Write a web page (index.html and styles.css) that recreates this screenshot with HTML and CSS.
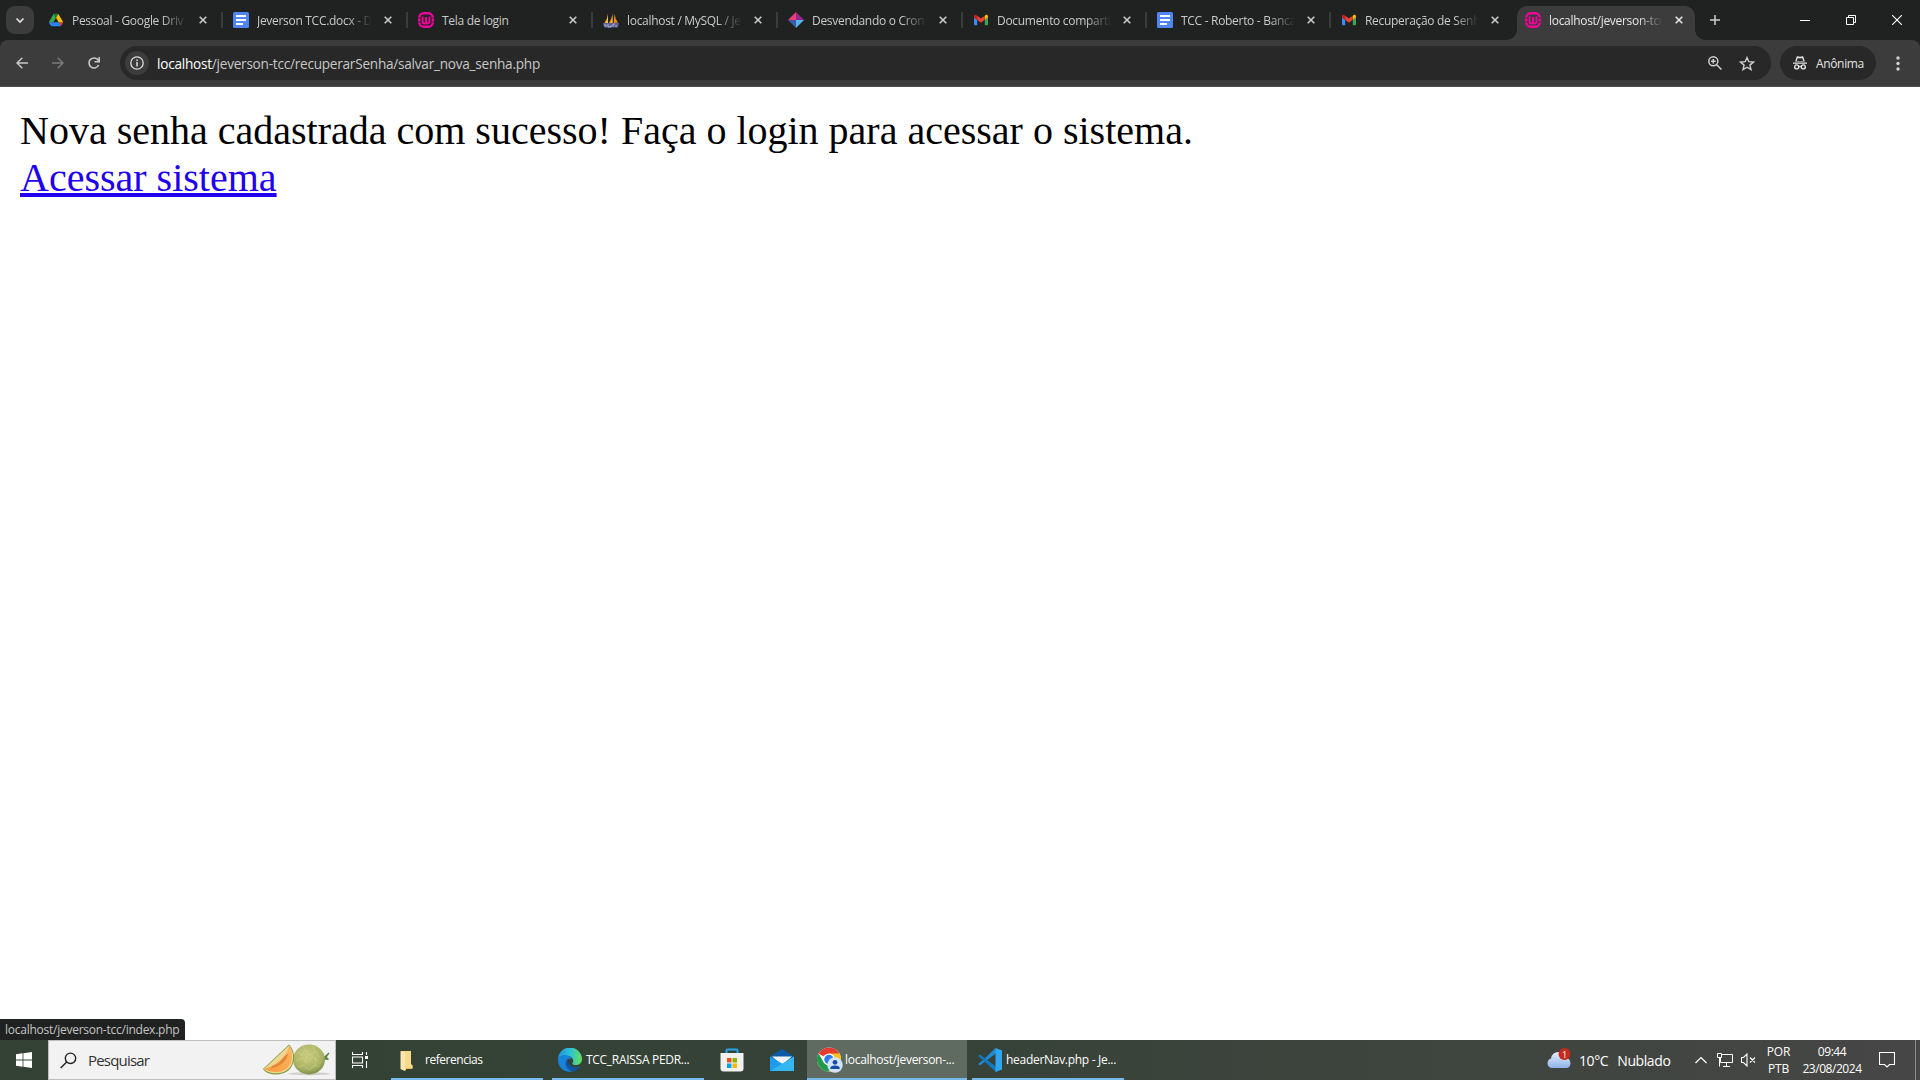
FILE: index.html
```html
<!DOCTYPE html>
<html lang="pt-BR">
<head>
<meta charset="utf-8">
<title>localhost/jeverson-tcc</title>
<link rel="stylesheet" href="styles.css">
</head>
<body>
<svg width="0" height="0" class="defs">
  <symbol id="x" viewBox="0 0 8 8"><path d="M.7.7l6.6 6.6M7.3.7L.7 7.3" fill="none" stroke="currentColor" stroke-width="1.6"/></symbol>
  <symbol id="drive" viewBox="0 0 87.3 78"><path fill="#4285f4" d="M6.6 66.85l3.85 6.65c.8 1.4 1.95 2.5 3.3 3.3L27.5 53H0c0 1.55.4 3.1 1.2 4.5z"/><path fill="#34a853" d="M43.65 25L29.9 1.2c-1.35.8-2.5 1.9-3.3 3.3L1.2 48.5A9 9 0 0 0 0 53h27.5z"/><path fill="#ea4335" d="M73.55 76.8c1.35-.8 2.5-1.9 3.3-3.3l1.6-2.75L86.1 57.5c.8-1.4 1.2-2.95 1.2-4.5H59.8l5.85 11.5z"/><path fill="#188038" d="M43.65 25L57.4 1.2C56.05.4 54.5 0 52.9 0H34.4c-1.6 0-3.15.45-4.5 1.2z"/><path fill="#2684fc" d="M59.8 53H27.5L13.75 76.8c1.35.8 2.9 1.2 4.5 1.2h50.8c1.6 0 3.15-.45 4.5-1.2z"/><path fill="#fbbc04" d="M73.4 26.5L60.7 4.5c-.8-1.4-1.95-2.5-3.3-3.3L43.65 25 59.8 53h27.45c0-1.55-.4-3.1-1.2-4.5z"/></symbol>
  <symbol id="docs" viewBox="0 0 16 16"><rect width="16" height="16" rx="1.5" fill="#4f86f7"/><path d="M3 4h10M3 8h10M3 12h7" stroke="#fff" stroke-width="2"/></symbol>
  <symbol id="wamp" viewBox="0 0 16 16"><rect x="1.2" y="1.2" width="13.6" height="13.6" rx="4.6" fill="none" stroke="#f0059a" stroke-width="2.4"/><path d="M4.600 4.500V9.500a1.700 1.700 0 0 0 3.400.5V5v5a1.700 1.700 0 0 0 3.400-.5V4.500" fill="none" stroke="#f0059a" stroke-width="1.900"/><path d="M0 6h2.500M13.500 6H16M0 10h2.500M13.500 10H16" stroke="#202221" stroke-width=".7"/></symbol>
  <symbol id="pma" viewBox="0 0 16 16"><path fill="#f29111" d="M5 1.500V11H1.200Q4.500 7 5 1.500zM9.500.300V11H5.800Q9.500 6 9.500.300zM11.500 1.500Q12 7 15 10.500l-4.200.5z"/><path fill="#f8c36a" d="M5 4v7H3zM9.500 3v8H8z"/><path fill="#5a5f96" d="M0 11h16l-1 4.500H1z"/><path d="M1 13h2v2M5 12v3h3v-2M10 15v-3h2M13 13v2" stroke="#c2c5df" fill="none" stroke-width=".8"/></symbol>
  <symbol id="gem" viewBox="0 0 16 16"><path fill="#ee3a7f" d="M8 0v8H0z"/><path fill="#92278f" d="M8 0l8 8H8z"/><path fill="#3b5ba9" d="M0 8h8v8z"/><path fill="#56b5e8" d="M8 8h8l-8 8z"/></symbol>
  <symbol id="gmail" viewBox="52 42 88 66"><path fill="#4285f4" d="M58 108h14V74L52 59v43a6 6 0 0 0 6 6"/><path fill="#34a853" d="M120 108h14a6 6 0 0 0 6-6V59l-20 15"/><path fill="#fbbc04" d="M120 48v26l20-15v-8c0-7.420-8.470-11.650-14.400-7.200"/><path fill="#ea4335" d="M72 74V48l24 18 24-18v26L96 92"/><path fill="#c5221f" d="M52 51v8l20 15V48l-5.600-4.200C60.460 39.350 52 43.580 52 51"/></symbol>
</svg>

<div class="tabbar">
  <button class="tab-search"><svg width="10" height="10" viewBox="0 0 10 10"><path d="M1.500 3.500L5 7l3.500-3.500" fill="none" stroke="#e3e3e3" stroke-width="1.700"/></svg></button>
  <div class="tab"><svg class="fav drive"><use href="#drive"/></svg><span class="title fade">Pessoal - Google Driv</span><svg class="close"><use href="#x"/></svg></div>
  <div class="tab"><svg class="fav"><use href="#docs"/></svg><span class="title fade">Jeverson TCC.docx - D</span><svg class="close"><use href="#x"/></svg></div>
  <div class="tab"><svg class="fav"><use href="#wamp"/></svg><span class="title">Tela de login</span><svg class="close"><use href="#x"/></svg></div>
  <div class="tab"><svg class="fav"><use href="#pma"/></svg><span class="title fade">localhost / MySQL / je</span><svg class="close"><use href="#x"/></svg></div>
  <div class="tab"><svg class="fav"><use href="#gem"/></svg><span class="title fade">Desvendando o Cron</span><svg class="close"><use href="#x"/></svg></div>
  <div class="tab narrow"><svg class="fav mail"><use href="#gmail"/></svg><span class="title fade">Documento comparti</span><svg class="close"><use href="#x"/></svg></div>
  <div class="tab narrow"><svg class="fav"><use href="#docs"/></svg><span class="title fade">TCC - Roberto - Banca</span><svg class="close"><use href="#x"/></svg></div>
  <div class="tab narrow last"><svg class="fav mail"><use href="#gmail"/></svg><span class="title fade">Recuperação de Senh</span><svg class="close"><use href="#x"/></svg></div>
  <div class="tab active"><svg class="fav"><use href="#wamp"/></svg><span class="title fade">localhost/jeverson-tcc</span><svg class="close"><use href="#x"/></svg></div>
  <svg class="new-tab" width="10" height="10"><path d="M5 0v10M0 5h10" stroke="#cfcfcf" stroke-width="1.500"/></svg>
  <div class="window-controls">
    <svg width="10" height="10"><path d="M0 5.500h10" stroke="#fff"/></svg>
    <svg width="10" height="10"><path d="M.5 2.500h7v7h-7zM2.500 2.500v-2h7v7h-2" fill="none" stroke="#fff"/></svg>
    <svg width="10" height="10"><path d="M0 0l10 10M10 0L0 10" stroke="#fff" stroke-width="1.100"/></svg>
  </div>
</div>

<div class="toolbar-wrap">
<div class="toolbar">
  <svg class="nav" width="12" height="12" viewBox="0 0 12 12"><path d="M12 6H1.200M6.300.700L1 6l5.300 5.300" fill="none" stroke="#c7c7c7" stroke-width="1.500"/></svg>
  <svg class="nav" width="12" height="12" viewBox="0 0 12 12"><path d="M0 6h10.800M5.700.700L11 6l-5.300 5.300" fill="none" stroke="#7b7b7b" stroke-width="1.500"/></svg>
  <svg class="nav" width="12" height="12" viewBox="0 0 12 12"><path d="M10.600 8A5 5 0 1 1 10.200 3.200L11 4.300M11.200 0v4.700H6.500" fill="none" stroke="#c7c7c7" stroke-width="1.600"/></svg>
  <div class="omnibox">
    <span class="info"><svg width="14" height="14" viewBox="0 0 14 14"><circle cx="7" cy="7" r="6.200" fill="none" stroke="#dcdcdc" stroke-width="1.300"/><path d="M7 6v4.400M7 3.500V5" stroke="#dcdcdc" stroke-width="1.500"/></svg></span>
    <span class="url"><b>localhost</b>/jeverson-tcc/recuperarSenha/salvar_nova_senha.php</span>
    <svg class="zoom" width="14" height="14" viewBox="0 0 14 14"><circle cx="5.300" cy="5.300" r="4.500" fill="none" stroke="#d0d0d0" stroke-width="1.500"/><path d="M8.700 8.700l4.800 4.800M5.300 3v4.600M3 5.300h4.600" stroke="#d0d0d0" stroke-width="1.500"/></svg>
    <svg class="star" width="16" height="15" viewBox="0 0 16 15"><path d="M8 1.600l1.800 4.100 4.600.4-3.500 3 1.100 4.500L8 11.200l-4 2.400 1.100-4.500-3.500-3 4.600-.4z" fill="none" stroke="#d0d0d0" stroke-width="1.400"/></svg>
  </div>
  <div class="incognito">
    <svg width="14" height="14" viewBox="0 0 14 14"><path fill="#e3e3e3" d="M0 6.500h14v1.300H0zM2.200 5.500L3.600.8Q3.800.2 4.500.300L7 .8 9.500.300q.7-.1.9.500l1.400 4.700z"/><path d="M4.600 2.300l-.8 2.700h6.400l-.8-2.700" fill="#282828"/><circle cx="3.700" cy="10.900" r="2" fill="none" stroke="#e3e3e3" stroke-width="1.400"/><circle cx="10.300" cy="10.900" r="2" fill="none" stroke="#e3e3e3" stroke-width="1.400"/><path d="M5.500 10.500h3" stroke="#e3e3e3" stroke-width="1.200"/></svg>
    <span>Anônima</span>
  </div>
  <svg class="menu" width="4" height="15"><g fill="#d0d0d0"><circle cx="2" cy="2" r="1.700"/><circle cx="2" cy="7.500" r="1.700"/><circle cx="2" cy="13" r="1.700"/></g></svg>
</div>
</div>

<main class="page">
  <div class="message">Nova senha cadastrada com sucesso! Faça o login para acessar o sistema.</div>
  <a class="link" href="#">Acessar sistema</a>
  <div class="status">localhost/jeverson-tcc/index.php</div>
</main>

<footer class="taskbar">
  <div class="start"><svg width="16" height="16" viewBox="0 0 16 16"><path fill="#fff" d="M0 2.200L6.600 1.300V7.600H0zM7.400 1.200L16 0v7.600H7.400zM0 8.400h6.600v6.300L0 13.800zM7.400 8.400H16V16l-8.600-1.200z"/></svg></div>
  <div class="search">
    <svg width="17" height="17" viewBox="0 0 17 17"><circle cx="10.500" cy="6.300" r="5.200" fill="none" stroke="#222" stroke-width="1.400"/><path d="M6.700 10L.7 16" stroke="#222" stroke-width="1.400"/></svg>
    <span>Pesquisar</span>
    <svg class="melon" width="68" height="32" viewBox="0 0 68 32">
      <defs><radialGradient id="mg" cx=".45" cy=".35" r=".7"><stop offset="0" stop-color="#ccca80"/><stop offset=".65" stop-color="#abb566"/><stop offset="1" stop-color="#748845"/></radialGradient><linearGradient id="mo" x1="1" y1="0" x2="0" y2="1"><stop offset="0" stop-color="#ffb868"/><stop offset="1" stop-color="#f99a3e"/></linearGradient></defs>
      <ellipse cx="46" cy="29.700" rx="21" ry="1.500" fill="#d2cfc8"/>
      <path d="M59 13.500q3-1 6.500-5l1 1q-2 2-2.500 4l2 1.500-1 1-5-.5z" fill="#5d8244"/>
      <ellipse cx="46" cy="15.500" rx="16" ry="15" fill="url(#mg)"/>
      <path d="M34 8l5 3 3-5 5 5 6-4 3 6M33 17l6-3 5 5 6-6 6 5M35 23l6-2 5 5 6-5 5 2M40 2l4 6M50 2l2 6M44 12l-2 7M53 13l-1 9" fill="none" stroke="#e3dfa0" stroke-width=".7" opacity=".5"/>
      <path d="M26 .5C35.500 10 32 30.500 13 30.500 6 30.500 2 28 0 25z" fill="#7c9a3e"/>
      <path d="M26 1.500C34 11 31 29.300 13 29.300 7 29.300 3 27.500 1 25z" fill="#f0d791"/>
      <path d="M26 1.500C32.500 11 29.500 28 13 28 7.500 28 4 26.500 1 25 12 22 24 14 26 1.500z" fill="url(#mo)"/>
      <path d="M25 9.500C24.500 17 17 22.500 8 24.200 10 20.500 13 21 16 18.500s4-6 9-9z" fill="#e38636"/>
    </svg>
  </div>
  <div class="taskview"><svg width="17" height="16" viewBox="0 0 17 16"><path d="M.5 0v2.500h10V0M.5 16v-2.500h10V16M.5 5h10v6H.5zM14.500 0v3M14.500 9v7" fill="none" stroke="#fff" stroke-width="1.100"/><path fill="#fff" d="M13 4h3v3h-3z"/></svg></div>

  <div class="app folder"><svg width="24" height="24" viewBox="0 0 24 24"><path fill="#e8bd58" d="M6 3h10v13l1.500 1v4H8z"/><path fill="#f6d98a" d="M6 3h10v14l1.500 1v2H11v2.500L6 21z"/><path fill="#fbe7ae" d="M5.500 3l4.500 2v18l-4.500-2z"/></svg><span>referencias</span></div>
  <div class="app edge"><svg width="24" height="24" viewBox="0 0 24 24"><defs><linearGradient id="e1" x1="0" y1=".4" x2="1" y2=".5"><stop offset="0" stop-color="#1d94dc"/><stop offset=".5" stop-color="#2fc2d5"/><stop offset="1" stop-color="#62df5a"/></linearGradient></defs><path d="M0 12A12 12 0 0 1 24 11c0 4-3 6-6.500 6-2.500 0-3.500-1-3-2 2-3-.5-7-5-7C5 8 1 10 0 12z" fill="url(#e1)"/><path d="M0 12C1 5 13 6 14 12c0-1-3-2-5 0-3 4 1 11 7 11C7 26 0 20 0 12z" fill="#1683d8"/><path d="M9.500 11C5 16 9 23 16 23.300c3-1 5.500-3.300 6.500-5.300-5 3-12.500 1-13-7z" fill="#10539f"/></svg><span>TCC_RAISSA PEDR...</span></div>
  <div class="pin"><svg width="24" height="24" viewBox="0 0 24 24"><path d="M6.500 6V2.500q0-1 1-1h9q1 0 1 1V6" fill="none" stroke="#26a7ed" stroke-width="2"/><path d="M.5 5h23v15.500q0 3-3 3h-17q-3 0-3-3z" fill="#f1f1f1"/><path fill="#f25022" d="M7 10h4.500v4.500H7z"/><path fill="#7fba00" d="M12.500 10H17v4.500h-4.500z"/><path fill="#00a4ef" d="M7 15.500h4.500V20H7z"/><path fill="#ffb900" d="M12.500 15.500H17V20h-4.500z"/></svg></div>
  <div class="pin mail-app"><svg width="24" height="24" viewBox="0 0 24 24"><path fill="#0a5ca8" d="M0 8.500L12 1l12 7.500V14H0z"/><path fill="#f0f3f5" d="M2 8.500h20L12 17z"/><path fill="#1e9bea" d="M0 8.500l12 7V23H0z"/><path fill="#34b6f0" d="M24 8.500V23H0z"/></svg></div>
  <div class="app chrome"><svg width="26" height="26" viewBox="0 0 26 26"><circle cx="12" cy="12.500" r="12" fill="#fff"/><path fill="#e33b2e" d="M12 12.500L1.600 6.500a12 12 0 0 1 20.800 0z"/><path fill="#fbc116" d="M12 6.500h10.400A12 12 0 0 1 12 24.500l5.200-9z"/><path fill="#229a4a" d="M1.600 6.500A12 12 0 0 0 12 24.500l5.200-9H6.800z"/><circle cx="12" cy="12.500" r="6" fill="#fff"/><circle cx="12" cy="12.500" r="4.700" fill="#3079e8"/><circle cx="18" cy="18" r="7.700" fill="#d3e2fb"/><circle cx="18" cy="15.300" r="2.400" fill="#174ea6"/><path fill="#174ea6" d="M13.300 22v-1q0-2.500 4.700-2.500t4.700 2.500v1z"/></svg><span>localhost/jeverson-...</span></div>
  <div class="app code"><svg width="24" height="24" viewBox="0 0 24 24"><path fill="#1f8ad2" d="M17.500 0L4.500 12.500 0 16l1.800 1.500L18 5.500z"/><path fill="#1478bd" d="M0 8l1.800-1.500L18 18.500V24L7 14z"/><path fill="#2ea6f2" d="M17.500 0L24 2.500v19L17.500 24z"/></svg><span>headerNav.php - Je...</span></div>

  <div class="tray">
    <div class="weather">
      <svg width="26" height="21" viewBox="0 0 26 21"><defs><linearGradient id="cl" x1="0" y1="0" x2="0" y2="1"><stop offset="0" stop-color="#e8f0fc"/><stop offset="1" stop-color="#8eb2ea"/></linearGradient></defs><path fill="url(#cl)" d="M5 20a5 5 0 0 1 0-9.500Q6 4 12.500 4T20 9.500Q24.500 11 24.500 15.500 24 20 20 20z"/><circle cx="18.500" cy="6" r="6" fill="#c42b1c"/><text x="18.500" y="9.500" text-anchor="middle" class="badge">1</text></svg>
      <span>10°C</span><span class="cond">Nublado</span>
    </div>
    <svg class="caret" width="12" height="8"><path d="M.5 7L6 1.500 11.500 7" fill="none" stroke="#fff" stroke-width="1.200"/></svg>
    <svg class="net" width="16" height="14"><path d="M4 1.500h11.500v8H3.500V5M9.500 9.500v3.500M6 13.500h7M.5.500h4v4h-4zM2.500 4.500v9" fill="none" stroke="#fff"/></svg>
    <svg class="vol" width="15" height="14"><path d="M.5 4.500h2L6 1v12L2.500 9.500h-2zM9 4.500l5 5M14 4.500l-5 5" fill="none" stroke="#fff" stroke-width="1.100"/></svg>
    <div class="lang"><span>POR</span><span>PTB</span></div>
    <div class="clock"><span>09:44</span><span>23/08/2024</span></div>
    <svg class="notif" width="16" height="16"><path d="M.5.500h15v12h-5L8 15l-2.500-2.500h-5z" fill="none" stroke="#fff" stroke-width="1.100"/></svg>
    <div class="peek"></div>
  </div>
</footer>
</body>
</html>
```
FILE: styles.css
```css
* { box-sizing: border-box; }
body {
  margin: 0;
  width: 1920px;
  height: 1080px;
  overflow: hidden;
  display: flex;
  flex-direction: column;
  background: #fff;
  font-family: "Open Sans", "Noto Sans", sans-serif;
  font-size: 12px;
}
svg { flex: none; display: block; }
.defs { position: absolute; }
span { white-space: nowrap; }

.tabbar {
  height: 40px;
  flex: none;
  display: flex;
  align-items: center;
  padding-left: 6px;
  background: #202221;
  color: #c9cac9;
}
.tab-search {
  width: 28px;
  height: 28px;
  margin-right: 4px;
  padding: 0;
  border: 0;
  border-radius: 9px;
  background: #3c3c3c;
  display: flex;
  align-items: center;
  justify-content: center;
}
.tab {
  position: relative;
  width: 185px;
  height: 40px;
  flex: none;
  display: flex;
  align-items: center;
  padding-left: 10px;
}
.tab.narrow { width: 184px; }
.tab::after {
  content: "";
  position: absolute;
  right: 0;
  top: 12px;
  width: 2px;
  height: 16px;
  background: #3c3c3c;
}
.tab.last::after { display: none; }
.fav { width: 16px; height: 16px; }
.fav.drive, .fav.mail { padding: 0 1px; }
.title {
  width: 115px;
  margin: 1px 12px 0 8px;
  letter-spacing: -0.3px;
}
.title.fade {
  -webkit-mask-image: linear-gradient(90deg, #000 78%, transparent);
  mask-image: linear-gradient(90deg, #000 78%, transparent);
}
.close { width: 8px; height: 8px; }
.narrow .title, .active .title { width: 114px; }
.tab.active {
  height: 34px;
  width: 178px;
  margin: 6px 0 0 2px;
  padding: 0 0 6px 8px;
  border-radius: 10px 10px 0 0;
  background: #3c3c3c;
  color: #e6e6e6;
}
.tab.active::before, .tab.active::after {
  content: "";
  position: absolute;
  top: auto;
  bottom: 0;
  width: 10px;
  height: 10px;
}
.tab.active::before { left: -10px; background: radial-gradient(circle at 0 0, transparent 9.5px, #3c3c3c 10px); }
.tab.active::after { right: -10px; background: radial-gradient(circle at 100% 0, transparent 9.5px, #3c3c3c 10px); }
.new-tab { margin-left: 15px; }
.window-controls { margin-left: auto; padding-right: 18px; display: flex; gap: 36px; }

.toolbar-wrap { flex: none; background: #202221; }
.toolbar {
  height: 47px;
  display: flex;
  align-items: center;
  padding: 0 20px 1px 16px;
  border-radius: 8px 8px 0 0;
  background: linear-gradient(0deg, #4c4c4c 1px, #3c3c3c 1px);
}
.nav { margin-right: 24px; }
.omnibox {
  width: 1651px;
  height: 34px;
  margin-left: -4px;
  padding-left: 5px;
  display: flex;
  align-items: center;
  border-radius: 17px;
  background: #282828;
}
.info {
  width: 24px;
  height: 24px;
  border-radius: 50%;
  background: #3c3c3c;
  display: flex;
  align-items: center;
  justify-content: center;
}
.url { margin-left: 8px; color: #c7c7c7; font-size: 13.6px; letter-spacing: -0.24px; }
.url b { font-weight: 400; color: #fff; }
.zoom { margin-left: auto; }
.star { margin: 0 16px 0 17px; }
.incognito {
  width: 96px;
  height: 34px;
  margin-left: 9px;
  padding-left: 13px;
  display: flex;
  align-items: center;
  gap: 9px;
  border-radius: 17px;
  background: #282828;
  color: #e3e3e3;
  letter-spacing: -0.35px;
}
.menu { margin-left: auto; }

.page {
  position: relative;
  flex: 1;
  padding: 20px;
  font: 40px/47px "Liberation Serif", serif;
}
.link {
  color: #2000ee;
  text-decoration: underline;
  text-decoration-thickness: 4px;
  text-underline-offset: 2px;
  text-decoration-skip-ink: none;
}
.status {
  position: absolute;
  left: 0;
  bottom: 0;
  width: 185px;
  height: 21px;
  padding-left: 5px;
  border-radius: 0 4px 0 0;
  background: #202221;
  color: #c4c4c4;
  font: 12px/21px "Open Sans", sans-serif;
  letter-spacing: -0.25px;
  white-space: nowrap;
}

.taskbar {
  height: 40px;
  flex: none;
  display: flex;
  align-items: center;
  background: linear-gradient(90deg, #334235, #364237 50%, #3b443c 62%, #414541 85%, #464646);
  color: #fff;
}
.start { width: 48px; padding-left: 16px; }
.search {
  width: 288px;
  height: 40px;
  display: flex;
  align-items: center;
  padding-left: 11px;
  border: 1px solid #bdbdbd;
  background: #f2f2f2;
  color: #333;
  font-size: 15px;
}
.search span { margin-left: 11px; letter-spacing: -0.8px; }
.melon { margin: 0 4px 0 auto; }
.taskview { width: 55px; padding-left: 16px; }
.app {
  width: 152px;
  height: 40px;
  flex: none;
  display: flex;
  align-items: center;
  gap: 4px;
  padding-left: 6px;
  border-bottom: 2px solid #76b9ed;
  letter-spacing: -0.29px;
}
.app.folder { padding-left: 4px; gap: 6px; letter-spacing: -0.47px; }
.app.edge { margin-left: 9px; }
.app.chrome { width: 160px; margin-left: 13px; padding-left: 10px; gap: 2px; background: #5f6a61; }
.app.chrome svg { margin-top: 2px; }
.app svg { margin-top: 1px; }
.app.code { margin-left: 5px; }
.pin { margin-left: 16px; width: 24px; }
.mail-app { margin-left: 26px; }
.tray { margin-left: auto; height: 40px; display: flex; align-items: center; }
.weather { display: flex; align-items: center; font-size: 14px; width: 149px; letter-spacing: -0.4px; }
.weather svg { margin-top: -3px; }
.weather span { margin-left: 7px; }
.weather .cond { margin-left: 9px; }
.badge { font-size: 9px; fill: #fff; letter-spacing: 0; }
.net { margin-left: 10px; }
.vol { margin-left: 8px; }
.lang, .clock { display: flex; flex-direction: column; align-items: center; line-height: 17px; }
.lang { width: 25px; margin-left: 10px; letter-spacing: -0.2px; }
.clock { width: 60px; margin-left: 11px; letter-spacing: -0.45px; }
.notif { margin-left: 17px; }
.peek { width: 5px; height: 40px; margin-left: 20px; border-left: 1px solid #8b8b8b; }
```
